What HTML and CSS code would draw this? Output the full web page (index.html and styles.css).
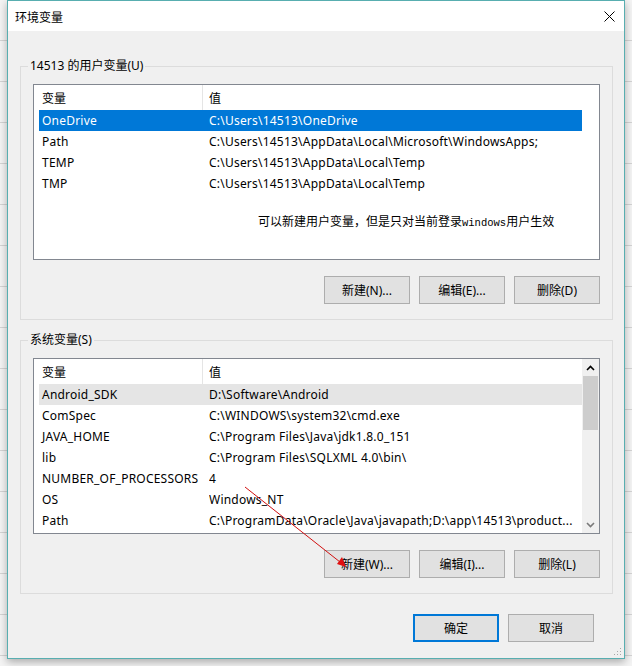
FILE: index.html
```html
<!DOCTYPE html>
<html lang="zh-CN">
<head>
<meta charset="utf-8">
<title>环境变量</title>
<link rel="stylesheet" href="styles.css">
</head>
<body>
<div class="desktop">
  <div class="dialog">
    <div class="titlebar">
      <span class="title">环境变量</span>
      <span class="close">
        <svg width="11" height="11" viewBox="0 0 11 11"><path d="M0.5 0.5 L10.5 10.5 M10.5 0.5 L0.5 10.5" stroke="#000" stroke-width="1" fill="none"/></svg>
      </span>
    </div>
    <div class="content">
      <fieldset class="group">
        <legend>14513 的用户变量(U)</legend>
        <div class="list">
          <div class="list-main">
            <div class="head"><span class="head-name">变量</span><span class="head-value">值</span></div>
            <div class="rows">
              <div class="row selected"><span>OneDrive</span><span class="val">C:\Users\14513\OneDrive</span></div>
              <div class="row"><span>Path</span><span class="val">C:\Users\14513\AppData\Local\Microsoft\WindowsApps;</span></div>
              <div class="row"><span>TEMP</span><span class="val">C:\Users\14513\AppData\Local\Temp</span></div>
              <div class="row"><span>TMP</span><span class="val">C:\Users\14513\AppData\Local\Temp</span></div>
            </div>
            <div class="note">可以新建用户变量，但是只对当前登录<span class="mono">windows</span>用户生效</div>
          </div>
          <div class="gutter"></div>
        </div>
        <div class="btn-row">
          <button class="btn">新建(N)...</button>
          <button class="btn">编辑(E)...</button>
          <button class="btn">删除(D)</button>
        </div>
      </fieldset>
      <fieldset class="group">
        <legend>系统变量(S)</legend>
        <div class="list">
          <div class="list-main">
            <div class="head"><span class="head-name">变量</span><span class="head-value">值</span></div>
            <div class="rows">
              <div class="row hover"><span>Android_SDK</span><span class="val">D:\Software\Android</span></div>
              <div class="row"><span>ComSpec</span><span class="val">C:\WINDOWS\system32\cmd.exe</span></div>
              <div class="row"><span>JAVA_HOME</span><span class="val">C:\Program Files\Java\jdk1.8.0_151</span></div>
              <div class="row"><span>lib</span><span class="val">C:\Program Files\SQLXML 4.0\bin\</span></div>
              <div class="row"><span>NUMBER_OF_PROCESSORS</span><span class="val">4</span></div>
              <div class="row"><span>OS</span><span class="val">Windows_NT</span></div>
              <div class="row"><span>Path</span><span class="val">C:\ProgramData\Oracle\Java\javapath;D:\app\14513\product...</span></div>
            </div>
          </div>
          <div class="scrollbar">
            <span class="sb-btn">
              <svg width="9" height="6" viewBox="0 0 9 6"><path d="M1 5 L4.5 1.5 L8 5" stroke="#000" stroke-width="1.6" fill="none"/></svg>
            </span>
            <span class="sb-thumb"></span>
            <span class="sb-track"></span>
            <span class="sb-btn">
              <svg width="9" height="6" viewBox="0 0 9 6"><path d="M1 1 L4.5 4.5 L8 1" stroke="#7a7a7a" stroke-width="1.6" fill="none"/></svg>
            </span>
          </div>
        </div>
        <div class="btn-row">
          <button class="btn">新建(W)...</button>
          <button class="btn">编辑(I)...</button>
          <button class="btn">删除(L)</button>
        </div>
      </fieldset>
      <div class="footer">
        <button class="btn default">确定</button>
        <button class="btn">取消</button>
      </div>
    </div>
    <svg class="grip" width="10" height="10" viewBox="0 0 10 10">
      <rect x="8" y="2" width="1" height="1" fill="#a8a8a8"/>
      <rect x="5" y="5" width="1" height="1" fill="#a8a8a8"/>
      <rect x="8" y="5" width="1" height="1" fill="#a8a8a8"/>
      <rect x="2" y="8" width="1" height="1" fill="#a8a8a8"/>
      <rect x="5" y="8" width="1" height="1" fill="#a8a8a8"/>
      <rect x="8" y="8" width="1" height="1" fill="#a8a8a8"/>
    </svg>
  </div>
  <svg class="annot" width="632" height="666" viewBox="0 0 632 666">
    <line x1="245" y1="487" x2="340" y2="562" stroke="#d01010" stroke-width="1"/>
    <polygon points="346,567 337,564 342,557" fill="#e01010"/>
  </svg>
</div>
</body>
</html>
```

FILE: styles.css
```css
* { box-sizing: border-box; }
html, body { margin: 0; padding: 0; }
body {
  font-family: "Noto Sans", "Noto Sans CJK SC", sans-serif;
  font-size: 12px;
  color: #000;
}
.desktop {
  position: relative;
  width: 632px;
  height: 666px;
  overflow: hidden;
  padding-left: 7px;
  background: #f4f4f4 repeating-linear-gradient(to bottom, transparent 0 40px, #d4d4d4 40px 41px);
}
.dialog {
  position: relative;
  width: 618px;
  height: 659px;
  border: 1px solid #58aeb0;
  background: #f0f0f0;
  box-shadow: 0 3px 8px rgba(0, 0, 0, 0.3);
  display: flex;
  flex-direction: column;
}
.titlebar {
  flex: none;
  height: 30px;
  background: #fff;
  display: flex;
  align-items: center;
  padding-left: 7px;
}
.title { flex: 1; font-family: "Noto Sans CJK SC", sans-serif; font-size: 12px; }
.close {
  width: 30px;
  height: 30px;
  display: flex;
  align-items: center;
  justify-content: center;
}
.content { padding: 27px 11px 0 12px; }
.group {
  margin: 0;
  min-width: 0;
  border: 1px solid #dcdcdc;
  padding: 10px 12px 15px 12px;
}
.group + .group { margin-top: 12px; }
.group legend {
  padding: 0 2px;
  margin-left: -5px;
  line-height: 16px;
}
.list {
  height: 176px;
  border: 1px solid #828790;
  background: #fff;
  display: flex;
  overflow: hidden;
}
.list-main { flex: 1; min-width: 0; }
.gutter { flex: none; width: 17px; }
.head { display: flex; height: 25px; align-items: stretch; }
.head-name {
  width: 169px;
  border-right: 1px solid #e5e5e5;
  padding-left: 8px;
  display: flex;
  align-items: center;
}
.head-value { padding-left: 6px; display: flex; align-items: center; }
.rows { margin-left: 5px; }
.row {
  display: grid;
  grid-template-columns: 167px 1fr;
  height: 21px;
  align-items: center;
  padding-left: 3px;
  white-space: nowrap;
  letter-spacing: 0.22px;
}
.row .val { overflow: hidden; }
.row.selected { background: #0078d7; color: #fff; }
.row.hover { background: #e5e5e5; }
.note {
  margin: 19px 0 0 224px;
  font-family: "Noto Sans CJK SC", sans-serif;
  font-size: 12px;
  line-height: 16px;
  white-space: nowrap;
}
.mono { font-family: "Liberation Mono", monospace; font-size: 10.5px; }
.scrollbar {
  flex: none;
  width: 17px;
  background: #f0f0f0;
  display: flex;
  flex-direction: column;
}
.sb-btn {
  height: 17px;
  display: flex;
  align-items: center;
  justify-content: center;
}
.sb-thumb { height: 54px; background: #cdcdcd; margin: 0 1px; }
.sb-track { flex: 1; }
.btn-row {
  display: flex;
  justify-content: flex-end;
  gap: 9px;
  margin-top: 16px;
}
.btn {
  width: 86px;
  height: 28px;
  padding: 0;
  border: 1px solid #adadad;
  background: #e1e1e1;
  color: #000;
  font: inherit;
  display: flex;
  align-items: center;
  justify-content: center;
}
.btn.default { border: 2px solid #0078d7; }
.footer {
  display: flex;
  justify-content: flex-end;
  gap: 9px;
  margin-top: 20px;
  padding-right: 19px;
}
.grip { position: absolute; right: 2px; bottom: 2px; }
.annot { position: absolute; left: 0; top: 0; pointer-events: none; }
```
